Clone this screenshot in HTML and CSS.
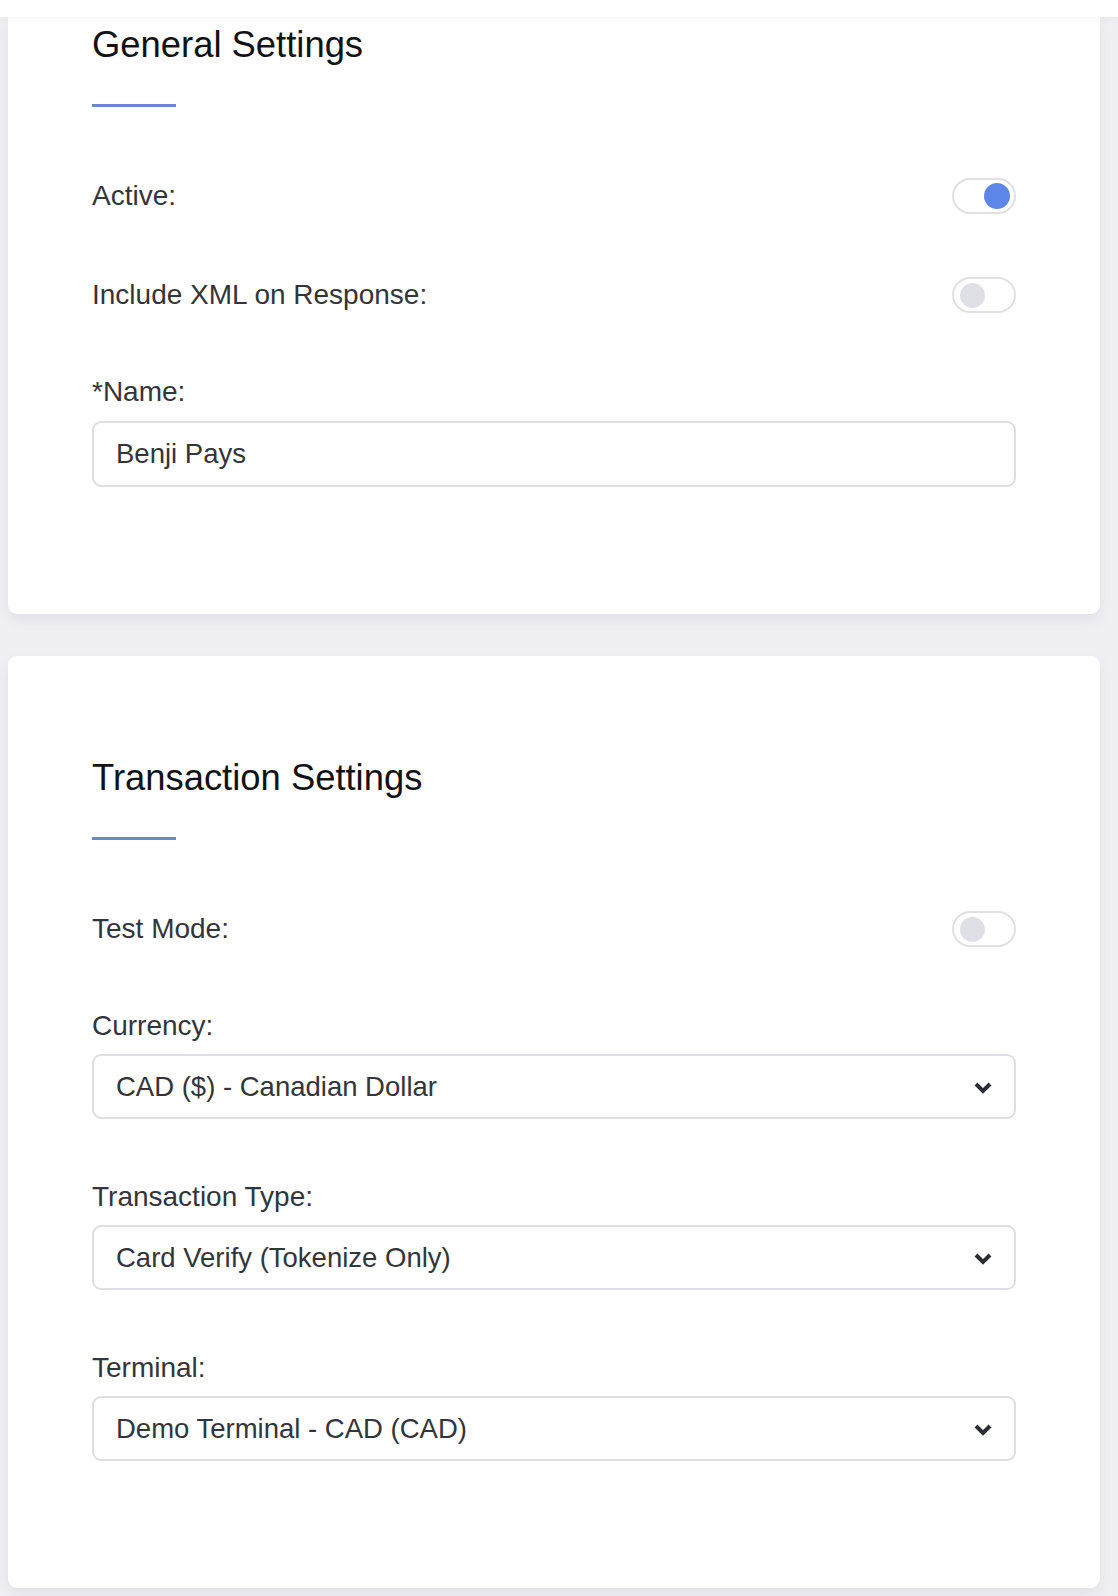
FILE: index.html
```html
<!DOCTYPE html>
<html lang="en">
<head>
<meta charset="utf-8">
<title>Settings</title>
<link rel="stylesheet" href="styles.css">
</head>
<body>
<div class="topbar"></div>
<main class="page">
  <section class="card card--first">
    <h2 class="card-title">General Settings</h2>
    <div class="title-rule"></div>

    <div class="toggle-row toggle-row--first">
      <span class="label">Active:</span>
      <span class="toggle toggle--on"><span class="knob"></span></span>
    </div>
    <div class="toggle-row">
      <span class="label">Include XML on Response:</span>
      <span class="toggle"><span class="knob"></span></span>
    </div>

    <div class="field field--after-toggle">
      <label class="label" for="name">*Name:</label>
      <input class="control" id="name" type="text" value="Benji Pays">
    </div>
  </section>

  <section class="card card--second">
    <h2 class="card-title">Transaction Settings</h2>
    <div class="title-rule"></div>

    <div class="toggle-row toggle-row--first">
      <span class="label">Test Mode:</span>
      <span class="toggle"><span class="knob"></span></span>
    </div>

    <div class="field field--after-toggle">
      <span class="label">Currency:</span>
      <div class="control select">
        <span>CAD ($) - Canadian Dollar</span>
        <svg class="chevron" width="18" height="12" viewBox="0 0 18 12"><polyline points="2,2 9,9 16,2" fill="none" stroke="#2b2e33" stroke-width="4" stroke-linejoin="miter"/></svg>
      </div>
    </div>

    <div class="field">
      <span class="label">Transaction Type:</span>
      <div class="control select">
        <span>Card Verify (Tokenize Only)</span>
        <svg class="chevron" width="18" height="12" viewBox="0 0 18 12"><polyline points="2,2 9,9 16,2" fill="none" stroke="#2b2e33" stroke-width="4" stroke-linejoin="miter"/></svg>
      </div>
    </div>

    <div class="field">
      <span class="label">Terminal:</span>
      <div class="control select">
        <span>Demo Terminal - CAD (CAD)</span>
        <svg class="chevron" width="18" height="12" viewBox="0 0 18 12"><polyline points="2,2 9,9 16,2" fill="none" stroke="#2b2e33" stroke-width="4" stroke-linejoin="miter"/></svg>
      </div>
    </div>
  </section>
</main>
</body>
</html>
```
FILE: styles.css
```css
* { box-sizing: border-box; }

html, body {
  margin: 0;
  padding: 0;
}

body {
  background: #f0f0f4;
  font-family: "Liberation Sans", Arial, Helvetica, sans-serif;
  color: #33353a;
  height: 1596px;
  overflow: hidden;
}

.topbar {
  position: relative;
  z-index: 2;
  height: 17px;
  background: #ffffff;
  box-shadow: 0 3px 10px rgba(0, 0, 0, 0.035);
}

.page {
  padding: 0 18px 0 8px;
}

.card {
  background: #ffffff;
  border-radius: 9px;
  padding: 0 84px 127px;
  box-shadow: 0 6px 14px rgba(40, 40, 80, 0.08);
}

.card--first {
  border-radius: 0 0 9px 9px;
  padding-top: 6px;
}

.card--second {
  margin-top: 42px;
  padding-top: 100px;
}

.card-title {
  margin: 0;
  font-size: 36.4px;
  line-height: 44px;
  font-weight: 400;
  color: #111214;
}

.title-rule {
  margin-top: 37px;
  width: 84px;
  height: 3px;
  background: #6a87cf;
}

.label {
  display: block;
  font-size: 28px;
  line-height: 34px;
  color: #33353a;
}

.toggle-row {
  display: flex;
  align-items: center;
  justify-content: space-between;
  height: 36px;
  margin-top: 63px;
}

.toggle-row--first {
  margin-top: 71px;
}

.toggle {
  display: flex;
  align-items: center;
  width: 64px;
  height: 36px;
  border: 2px solid #e1e1e5;
  border-radius: 18px;
  background: #ffffff;
  padding: 0 6px;
}

.knob {
  width: 25px;
  height: 25px;
  border-radius: 50%;
  background: #dfe0e6;
}

.toggle--on {
  justify-content: flex-end;
  padding: 0 4px;
}

.toggle--on .knob {
  width: 26px;
  height: 26px;
  background: #5c87e8;
}

.field {
  margin-top: 61px;
}

.field--after-toggle {
  margin-top: 62px;
}

.control {
  display: block;
  width: 100%;
  height: 65px;
  margin-top: 11px;
  border: 2px solid #dfdfe3;
  border-radius: 9px;
  background: #ffffff;
  padding: 0 22px;
  font-family: "Liberation Sans", Arial, Helvetica, sans-serif;
  font-size: 27.5px;
  color: #33353a;
  outline: none;
}

input.control {
  height: 66px;
  margin-top: 12px;
}

.select {
  display: flex;
  align-items: center;
  justify-content: space-between;
}

.chevron {
  display: block;
  margin-top: 3px;
  margin-right: 0;
}
```
